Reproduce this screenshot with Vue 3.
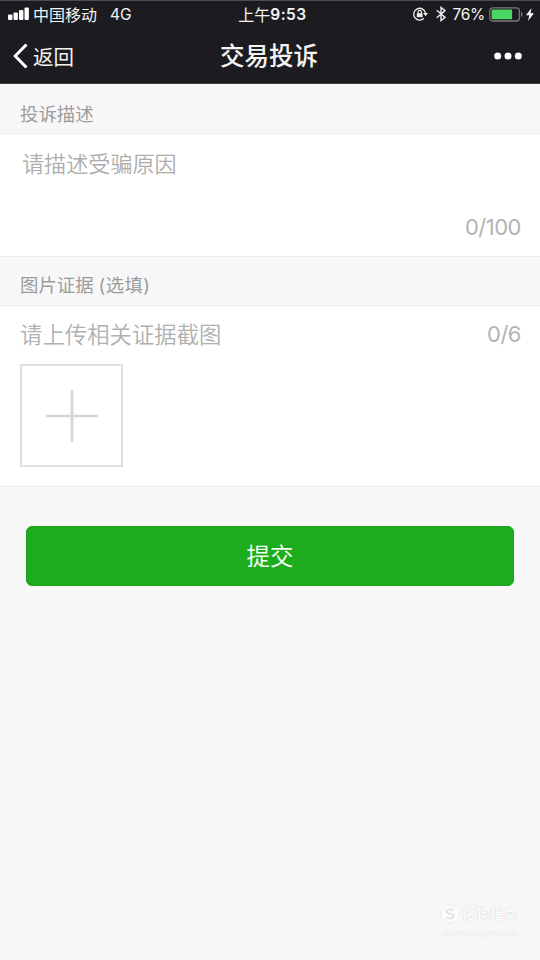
<script setup>
import { ref } from 'vue'

const description = ref('')
const images = ref([])
const bars = [5.5, 7.5, 10, 12.5]
</script>

<template>
  <div class="screen">
    <header class="top">
      <div class="status">
        <div class="status-left">
          <svg class="signal" width="21" height="13" viewBox="0 0 21 13">
            <rect v-for="(h, i) in bars" :key="h" :x="i * 5.5" :y="13 - h" width="4.4" :height="h" rx="1" fill="#fff" />
          </svg>
          <span class="carrier">中国移动</span>
          <span class="network">4G</span>
        </div>
        <div class="clock"><span>上午</span><span class="digits">9:53</span></div>
        <div class="status-right">
          <svg class="lock" width="15" height="14" viewBox="0 0 15 14" fill="none" stroke="#eee" stroke-width="1.3">
            <path d="M10.9 11.3A5.9 5.9 0 1 1 12.4 5.8" />
            <path d="M10.2 6.1h4.8l-2.4 3.2z" fill="#eee" stroke="none" />
            <rect x="3.8" y="6.2" width="5.8" height="4" fill="#eee" stroke="none" />
            <path d="M5 6.4V5a1.7 1.7 0 0 1 3.4 0v1.4" stroke-width="1.2" />
          </svg>
          <svg class="bluetooth" width="10" height="16" viewBox="0 0 10 16" fill="none" stroke="#eee" stroke-width="1.4">
            <path d="M.8 4.3 9 11.4 5 14.5v-13l4 3.1L.8 11.7" />
          </svg>
          <span class="percent">76%</span>
          <svg class="battery" width="35" height="15" viewBox="0 0 35 15">
            <rect x=".8" y=".8" width="29.6" height="13.2" rx="3" fill="none" stroke="#77787a" stroke-width="1.3" />
            <rect x="2.6" y="2.6" width="20.5" height="9.6" rx="1" fill="#4bd763" />
            <path d="M32 4.8c2 .8 2 4.4 0 5.2z" fill="#77787a" />
          </svg>
          <svg width="8" height="13" viewBox="0 0 8 13"><path d="M5.5 0 0 7.3h3.4L2 13l6-7.7H4.5z" fill="#fff" /></svg>
        </div>
      </div>
      <nav class="nav">
        <div class="back">
          <svg width="15" height="26" viewBox="0 0 15 26" fill="none" stroke="#fff" stroke-width="3">
            <path d="M13.5 1.5 2.2 13l11.3 11.5" />
          </svg>
          <span>返回</span>
        </div>
        <h1 class="title">交易投诉</h1>
        <svg class="more" width="28" height="8" viewBox="0 0 28 8" fill="#fff">
          <circle cx="3.7" cy="4" r="3.5" /><circle cx="14" cy="4" r="3.5" /><circle cx="24.3" cy="4" r="3.5" />
        </svg>
      </nav>
    </header>

    <main>
      <h2 class="label first">投诉描述</h2>
      <section class="panel describe">
        <p class="hint">请描述受骗原因</p>
        <span class="count">{{ description.length }}/100</span>
      </section>
      <h2 class="label second">图片证据<span class="optional">(选填)</span></h2>
      <section class="panel upload">
        <div class="upload-head">
          <p class="hint">请上传相关证据截图</p>
          <span class="count">{{ images.length }}/6</span>
        </div>
        <button class="add" aria-label="添加图片">
          <svg width="52" height="52" viewBox="0 0 52 52" fill="none" stroke="#d4d4d4" stroke-width="2.6">
            <path d="M26 0v52M0 26h52" />
          </svg>
        </button>
      </section>
      <button class="submit">提交</button>
    </main>

    <footer class="mark">
      <div class="brand">
        <svg width="20" height="20" viewBox="0 0 20 20" fill="none">
          <circle cx="10" cy="10" r="9" fill="#fdfdfd" stroke="#ededed" />
          <path d="M14 6.8C11.5 4.8 6.4 5.2 6.4 7.7c0 2.8 7.5 1.7 7.5 4.6 0 2.5-5.3 3-8 .7" stroke="#e5e5e5" stroke-width="2" />
        </svg>
        <span>搜狗指南</span>
      </div>
      <span class="site">zhinan.sogou.com</span>
    </footer>
  </div>
</template>

<style>
body { margin: 0; background: #f7f7f7; }
</style>

<style scoped>
.screen {
  box-sizing: border-box;
  width: 540px;
  height: 960px;
  display: flex;
  flex-direction: column;
  background: #f7f7f7;
  font-family: Inter, "Noto Sans CJK SC", sans-serif;
  overflow: hidden;
}
h1, h2, p { margin: 0; font-weight: 400; }
button { padding: 0; font-family: inherit; }
svg { display: block; flex: none; }
.top {
  box-sizing: border-box;
  height: 84px;
  background: #1c1c20;
  border-top: 1px solid #4c4c50;
  border-bottom: 1px solid #3c3c3e;
  color: #f4f4f4;
}
.status, .nav { display: grid; grid-template-columns: 1fr auto 1fr; align-items: center; }
.status { height: 26px; padding: 0 6px 0 8px; font-size: 16px; line-height: 26px; }
.status-left, .status-right, .clock, .back { display: flex; align-items: center; }
.status-left > span, .clock, .percent { padding-top: 1px; }
.signal, .lock, .bluetooth { margin-bottom: 2px; }
.status-right { justify-content: flex-end; }
.carrier { margin-left: 4px; }
.network { margin-left: 13px; font-size: 15.5px; }
.clock { margin-left: 3px; font-weight: 400; font-size: 16px; }
.digits { font-weight: 600; font-size: 15.5px; letter-spacing: .5px; }
.bluetooth { margin-left: 8px; }
.percent { margin: 0 4px 0 7px; font-size: 15.5px; letter-spacing: -.3px; }
.battery { margin-right: 2px; }
.nav { height: 55px; padding: 0 18px 0 13px; }
.back { gap: 5px; font-size: 20.5px; }
.back span { padding-top: 1px; }
.title { margin-left: 3px; padding-top: 1px; font-size: 24.5px; font-weight: 500; line-height: 56px; }
.more { justify-self: end; }
.label {
  box-sizing: border-box;
  padding-left: 20px;
  border-bottom: 1px solid #ebebeb;
  color: #9c9c9c;
  font-size: 18.4px;
}
.first { height: 50px; line-height: 60px; }
.second { height: 49px; line-height: 57px; }
.optional { margin-left: 5px; letter-spacing: .4px; }
.panel { box-sizing: border-box; background: #fff; border-bottom: 1px solid #ebebeb; }
.hint { color: #b0b0b0; font-size: 22.4px; font-weight: 350; line-height: 34px; }
.count { color: #b3b3b3; font-size: 22px; line-height: 32px; letter-spacing: -.5px; }
.describe {
  height: 123px;
  padding: 13px 19px 13px 22px;
  display: flex;
  flex-direction: column;
  justify-content: space-between;
}
.describe .hint { font-size: 22.1px; color: #adadad; }
.describe .count { align-self: flex-end; }
.upload { height: 181px; padding: 12px 19px 0 20px; }
.upload-head { height: 32px; display: flex; justify-content: space-between; }
.add {
  box-sizing: border-box;
  width: 103px;
  height: 103px;
  margin-top: 14px;
  display: flex;
  align-items: center;
  justify-content: center;
  border: 2px solid #e0e0e0;
  background: #fff;
}
.submit {
  box-sizing: border-box;
  display: block;
  width: 488px;
  height: 60px;
  margin: 39px 0 0 26px;
  padding-top: 2px;
  border: 1px solid #1b9d1d;
  border-radius: 6px;
  background: #1dac1c;
  color: #f1fbef;
  font-size: 23.5px;
  line-height: 56px;
}
.mark { margin: auto 22px 21px auto; display: flex; flex-direction: column; color: #fff; }
.brand {
  display: flex;
  align-items: center;
  gap: 2px;
  font-size: 14px;
  font-weight: 500;
  line-height: 24px;
  text-shadow: 0 0 1px #c4c4c4;
}
.site { font-size: 9px; line-height: 13px; text-shadow: 0 0 1px #c8c8c8; }
</style>
